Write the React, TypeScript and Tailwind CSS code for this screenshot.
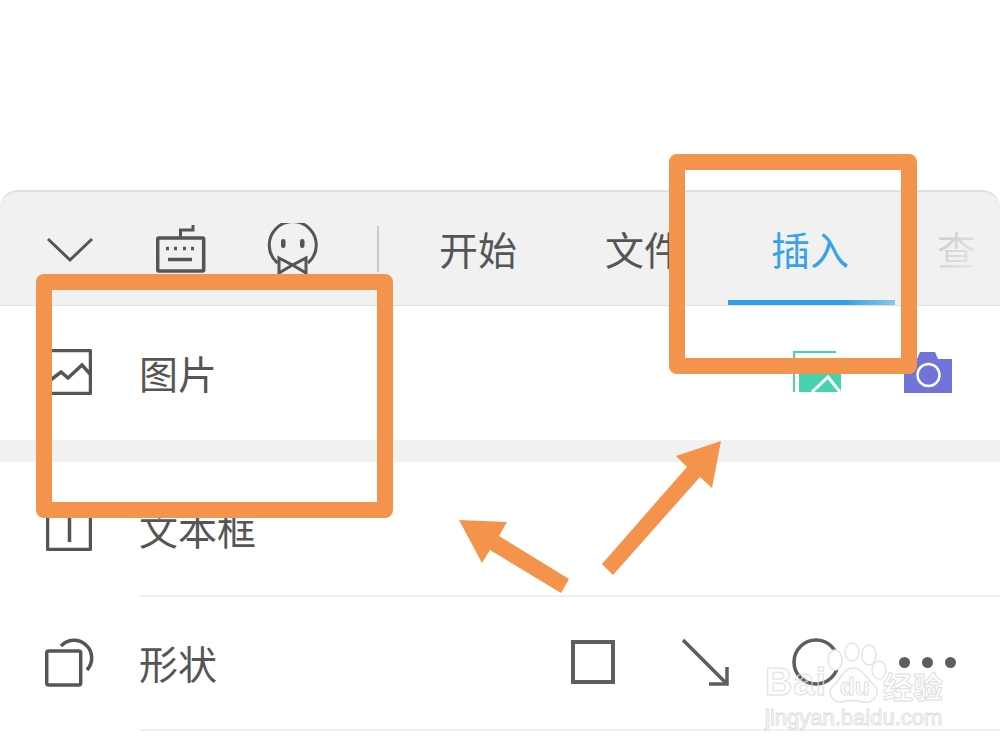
import React from "react";

const cjk = "font-['Noto_Sans_CJK_SC','Liberation_Sans',sans-serif]";

function Chevron() {
  return (
    <svg width="48" height="30" viewBox="0 0 48 30" fill="none" stroke="#555" strokeWidth="3">
      <path d="M2 4 L24 25 L46 4" />
    </svg>
  );
}
function Keyboard() {
  return (
    <svg width="50" height="50" viewBox="0 0 50 50" fill="none" stroke="#555" strokeWidth="3.5">
      <rect x="1.7" y="14" width="46" height="33" rx="1" />
      <path d="M24.5 14 V6 H37 V1" strokeWidth="3" />
      <path d="M12 35.5 H36" />
      <path d="M10 24.5 H13 M18 24.5 H21 M27 24.5 H30 M35 24.5 H38" />
    </svg>
  );
}
function Smile() {
  return (
    <svg width="52" height="52" viewBox="0 0 52 52" fill="none" stroke="#555" strokeWidth="3">
      <path d="M10.5 40 A23.5 23.5 0 1 1 41 40" />
      <rect x="14" y="16" width="4.5" height="9" rx="2.2" fill="#555" stroke="none" />
      <rect x="33" y="16" width="4.5" height="9" rx="2.2" fill="#555" stroke="none" />
      <path d="M12 35 L25.5 42 L39 35 V50 L25.5 42 L12 50 Z" />
    </svg>
  );
}
function PictureIcon() {
  return (
    <svg width="46" height="46" viewBox="0 0 46 46" fill="none" stroke="#555" strokeWidth="3.5">
      <rect x="1.5" y="1.5" width="43" height="43" rx="1" />
      <path d="M2 33 L15 23 L22 29 L36 16 L45 26" />
    </svg>
  );
}
function TextBoxIcon() {
  return (
    <svg width="46" height="46" viewBox="0 0 46 46" fill="none" stroke="#555" strokeWidth="3.5">
      <rect x="1.5" y="1.5" width="43" height="43" rx="1" />
      <path d="M12 11 H35 M23.5 11 V37" />
    </svg>
  );
}
function ShapeIcon() {
  return (
    <svg className="-ml-px" width="50" height="50" viewBox="0 0 50 50" fill="none" stroke="#555" strokeWidth="3.5">
      <rect x="1.7" y="14" width="34" height="34" rx="2" />
      <path d="M16 9 A17 17 0 0 1 42 33" />
    </svg>
  );
}
function GalleryIcon() {
  return (
    <svg width="48" height="42" viewBox="0 0 48 42">
      <path d="M1 41 V1 H43" fill="none" stroke="#46d3ae" strokeWidth="2" />
      <path d="M6 7 H48 V41 H6 Z" fill="#46d3ae" />
      <path d="M19 41 L35 26 L47 41" fill="none" stroke="#fff" strokeWidth="3" />
    </svg>
  );
}
function CameraIcon() {
  return (
    <svg width="48" height="41" viewBox="0 0 48 41">
      <path d="M0 7 H13 L16 0 H31 L34 7 H48 V41 H0 Z" fill="#7074d8" />
      <circle cx="24.5" cy="23" r="11" fill="none" stroke="#fff" strokeWidth="2.5" />
    </svg>
  );
}
function SquareIcon() {
  return (
    <svg width="46" height="46" viewBox="0 0 46 46" fill="none" stroke="#5e5e5e" strokeWidth="4">
      <rect x="3" y="3" width="40" height="40" />
    </svg>
  );
}
function ArrowIcon() {
  return (
    <svg width="48" height="48" viewBox="0 0 48 48" fill="none" stroke="#5e5e5e" strokeWidth="3.5">
      <path d="M2 2 L45 45" />
      <path d="M46 29 V46 H28" />
    </svg>
  );
}
function CircleIcon() {
  return (
    <svg width="48" height="48" viewBox="0 0 48 48" fill="none" stroke="#5e5e5e" strokeWidth="3.5">
      <circle cx="24" cy="24" r="22" />
    </svg>
  );
}

function Row({ icon, label, children, divider }: { icon: React.ReactNode; label: string; children?: React.ReactNode; divider?: boolean }) {
  return (
    <div className="relative flex h-[134px] items-center pb-[2px] pl-[46px] pr-[48px]">
      <div className="flex w-[93px] shrink-0 items-center">{icon}</div>
      <div className={`flex-1 text-[39px] leading-[50px] text-[#555] ${cjk}`}>{label}</div>
      {children}
      {divider && <div className="absolute -bottom-px left-[139px] right-0 h-[2px] bg-[#f0f0f0]" />}
    </div>
  );
}

function Tab({ label, active, fade }: { label: string; active?: boolean; fade?: boolean }) {
  return (
    <div className={`relative w-[166px] shrink-0 text-[39px] leading-[50px] ${cjk} ${active ? "text-[#36a3e8]" : "text-[#555]"}`}>
      <span className={fade ? "bg-gradient-to-br from-[#c4c4c4] to-[#ececec] bg-clip-text text-transparent" : ""}>{label}</span>
    </div>
  );
}

export default function App() {
  return (
    <div className="relative h-[751px] w-[1000px] overflow-hidden bg-white">
      <div className="pt-[190px]">
        {/* panel */}
        <div className="h-[116px] overflow-hidden rounded-t-[18px] border-t-2 border-b border-[#e0e0e0] bg-[#f1f1f1]">
          <div className="relative flex h-full items-start pl-[46px] pt-[32px]">
            <div className="mt-[11px] w-[110px] shrink-0"><Chevron /></div>
            <div className="w-[111px] shrink-0"><Keyboard /></div>
            <div className="-mt-px w-[110px] shrink-0"><Smile /></div>
            <div className="mr-[60px] mt-[2px] h-[46px] w-[2px] shrink-0 bg-[#c9c9c9]" />
            <div className="-mt-px flex">
              <Tab label="开始" />
              <Tab label="文件" />
              <Tab label="插入" active />
              <Tab label="查" fade />
            </div>
            <div className="absolute bottom-0 left-[728px] h-[5px] w-[167px] bg-gradient-to-r from-[#2f9fe8] from-70% to-[#85c6ee]" />
          </div>
        </div>

        <Row icon={<PictureIcon />} label="图片">
          <div className="flex items-center gap-[63px]">
            <GalleryIcon />
            <CameraIcon />
          </div>
        </Row>
        <div className="h-[22px] bg-[#f1f1f1]" />
        <Row icon={<TextBoxIcon />} label="文本框" divider />
        <Row icon={<ShapeIcon />} label="形状" divider>
          <div className="-mr-[4px] flex items-center">
            <SquareIcon />
            <div className="ml-[65px]"><ArrowIcon /></div>
            <div className="ml-[63px]"><CircleIcon /></div>
            <div className="ml-[59px] flex gap-[12px]">
              <span className="h-[11px] w-[11px] rounded-full bg-[#5e5e5e]" />
              <span className="h-[11px] w-[11px] rounded-full bg-[#5e5e5e]" />
              <span className="h-[11px] w-[11px] rounded-full bg-[#5e5e5e]" />
            </div>
          </div>
        </Row>
      </div>

      {/* Watermark */}
      <div className="pointer-events-none absolute left-[765px] top-[640px] h-[105px] w-[200px]">
        <svg className="absolute left-[56px] top-[2px]" width="80" height="62" viewBox="0 0 80 62" fill="#fff" stroke="#e4e4e4" strokeWidth="1.5">
          <ellipse cx="14" cy="18" rx="7" ry="10" />
          <ellipse cx="31" cy="10" rx="7" ry="9" />
          <ellipse cx="48" cy="13" rx="7" ry="10" />
          <ellipse cx="58" cy="28" rx="7" ry="9" />
          <path d="M32 26 C42 26 46 38 54 44 C60 52 52 62 42 60 C34 58 28 58 20 60 C10 60 6 50 12 44 C20 38 22 26 32 26 Z" />
        </svg>
        <span className="absolute left-0 top-[20px] text-[38px] font-bold leading-[44px] tracking-[1px] text-transparent [-webkit-text-stroke:1px_#dedede] font-['Liberation_Sans',sans-serif]">Bai</span>
        <span className="absolute left-[75px] top-[33px] text-[24px] font-bold leading-[28px] text-transparent [-webkit-text-stroke:1px_#dedede] font-['Liberation_Sans',sans-serif]">du</span>
        <span className={`absolute left-[118px] top-[26px] text-[30px] font-bold leading-[38px] text-transparent [-webkit-text-stroke:1px_#dedede] ${cjk}`}>经验</span>
        <span className="absolute left-0 top-[64px] text-[22px] leading-[28px] text-transparent [-webkit-text-stroke:1px_#e0e0e0] font-['Liberation_Sans',sans-serif]">jingyan.baidu.com</span>
      </div>

      {/* Annotations */}
      <div className="absolute left-[36px] top-[274px] h-[244px] w-[357px] rounded-[8px] border-[16px] border-[#f4934c]" />
      <div className="absolute left-[669px] top-[154px] h-[220px] w-[248px] rounded-[8px] border-[16px] border-[#f4934c]" />
      <svg className="absolute left-[440px] top-[420px]" width="300" height="180" viewBox="0 0 300 180" fill="#f4934c">
        <path d="M281 21 L272 68 L260 57 L173 155 L162 144 L247 47 L236 36 Z" />
        <path d="M19 100 L67 102 L59 116 L129 159 L121 173 L50 130 L42 143 Z" />
      </svg>
    </div>
  );
}
